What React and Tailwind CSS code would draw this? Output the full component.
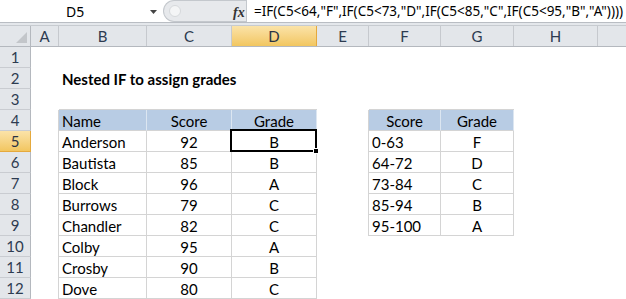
import React from "react";

const COLS = [
  { k: "A", w: 28 },
  { k: "B", w: 88 },
  { k: "C", w: 85 },
  { k: "D", w: 85 },
  { k: "E", w: 52 },
  { k: "F", w: 72 },
  { k: "G", w: 73 },
  { k: "H", w: 84 },
  { k: "I", w: 60 },
];

const students = [
  ["Anderson", 92, "B"],
  ["Bautista", 85, "B"],
  ["Block", 96, "A"],
  ["Burrows", 79, "C"],
  ["Chandler", 82, "C"],
  ["Colby", 95, "A"],
  ["Crosby", 90, "B"],
  ["Dove", 80, "C"],
];

const lookup = [
  ["0-63", "F"],
  ["64-72", "D"],
  ["73-84", "C"],
  ["85-94", "B"],
  ["95-100", "A"],
];

const font = { fontFamily: "Lato, 'Liberation Sans', sans-serif" };

function cellsFor(row) {
  const m = {};
  if (row === 2) {
    m.B = { text: "Nested IF to assign grades", align: "left", bold: true };
  }
  if (row === 3) {
    m.B = { bb: true };
    m.C = { bb: true };
    m.D = { bb: true };
    m.F = { bb: true };
    m.G = { bb: true };
  }
  if (row >= 4 && row <= 12) {
    m.A = { br: true };
  }
  if (row >= 4 && row <= 9) {
    m.E = { br: true };
  }
  if (row === 4) {
    m.B = { text: "Name", align: "left", hdr: true };
    m.C = { text: "Score", align: "center", hdr: true };
    m.D = { text: "Grade", align: "center", hdr: true };
    m.F = { text: "Score", align: "center", hdr: true };
    m.G = { text: "Grade", align: "center", hdr: true };
  }
  if (row >= 5 && row <= 12) {
    const s = students[row - 5];
    m.B = { text: s[0], align: "left", tbl: true };
    m.C = { text: String(s[1]), align: "center", tbl: true };
    m.D = { text: s[2], align: "center", tbl: true, sel: row === 5 };
  }
  if (row >= 5 && row <= 9) {
    const l = lookup[row - 5];
    m.F = { text: l[0], align: "left", tbl: true };
    m.G = { text: l[1], align: "center", tbl: true };
  }
  return m;
}

function Cell({ w, c }) {
  const cls = ["relative shrink-0 h-[21px] text-[15px] leading-[21px] text-black"];
  if (c && c.hdr) cls.push("bg-[#b8cce4] border-r border-b border-r-[#dce6f1] border-b-[#d4d4d4]");
  else if (c && c.tbl) cls.push("border-r border-b border-[#d4d4d4]");
  else {
    if (c && c.br) cls.push("border-r border-[#d4d4d4]");
    if (c && c.bb) cls.push("border-b border-[#d4d4d4]");
  }
  if (c && c.align === "center") cls.push("text-center");
  else cls.push("pl-[3px]");
  if (c && c.bold) cls.push("font-bold whitespace-nowrap overflow-visible");
  return (
    <div className={cls.join(" ")} style={{ width: w }}>
      {c && c.text ? <span className="relative top-[1px] whitespace-nowrap">{c.text}</span> : null}
      {c && c.sel ? (
        <div className="absolute left-[-2px] top-[-2px] w-[87px] h-[23px] border-2 border-black z-10">
          <div className="absolute right-[-4px] bottom-[-4px] w-[6px] h-[6px] bg-black border border-white" />
        </div>
      ) : null}
    </div>
  );
}

export default function App() {
  const rows = Array.from({ length: 12 }, (_, i) => i + 1);
  return (
    <div className="w-[626px] h-[299px] overflow-hidden bg-white" style={font}>
      {/* Formula bar */}
      <div className="flex h-[23px] bg-white border-b border-[#b9bdc3]">
        <div className="relative w-[163px] flex items-center">
          <span className="absolute left-[66px] top-[1px] leading-[21px] text-black" style={{ fontFamily: "'Noto Sans', sans-serif", fontSize: 14 }}>D5</span>
          <svg className="absolute left-[150px] top-[10px]" width="7" height="4" viewBox="0 0 7 4">
            <path d="M0 0 H7 L3.5 4 Z" fill="#444" />
          </svg>
        </div>
        <div className="relative w-[83px] h-[22px] bg-[#e7e9ec] rounded-l-[11px] border-l border-t border-b border-[#c4c8cd]">
          <div className="absolute left-[5px] top-[4px] w-[12px] h-[12px] rounded-full bg-[#f4f5f6] border border-[#d6d9dc]" />
          <span className="absolute left-[69px] top-[1px] text-[14px] italic font-bold text-[#333]" style={{ fontFamily: "'Liberation Serif', serif" }}>fx</span>
        </div>
        <div className="w-[1px] bg-[#c4c8cd]" />
        <div className="flex-1 pl-[7px] leading-[22px] text-black whitespace-nowrap overflow-hidden" style={{ fontFamily: "'Noto Sans', sans-serif", fontSize: 13.5 }}>
          =IF(C5&lt;64,"F",IF(C5&lt;73,"D",IF(C5&lt;85,"C",IF(C5&lt;95,"B","A"))))
        </div>
      </div>
      <div className="h-[3px] bg-[#e4e7eb] border-b border-[#c7cbd0]" />
      {/* column headers */}
      <div className="flex h-[21px] bg-[#e3e6ea] border-b border-[#b4b8be]">
        <div className="relative shrink-0 w-[31px] h-[20px] border-r border-[#b4b8be]">
          <svg className="absolute right-[3px] bottom-[3px]" width="11" height="11" viewBox="0 0 11 11">
            <path d="M11 0 V11 H0 Z" fill="#c3c6ca" />
          </svg>
        </div>
        {COLS.map((c) => (
          <div
            key={c.k}
            className={
              "shrink-0 h-[20px] text-center text-[15px] leading-[21px] border-r " +
              (c.k === "D"
                ? "bg-gradient-to-b from-[#fbe3a8] to-[#f2c65f] border-[#e5a93d] text-[#2a3344]"
                : "border-[#c6c9ce] text-[#2d3b50]")
            }
            style={{ width: c.w }}
          >
            {c.k === "I" ? "" : c.k}
          </div>
        ))}
      </div>
      {rows.map((r) => {
        const m = cellsFor(r);
        return (
          <div key={r} className="flex h-[21px]">
            <div
              className={
                "shrink-0 w-[31px] h-[21px] text-center text-[15px] leading-[21px] border-r border-b " +
                (r === 5
                  ? "bg-gradient-to-b from-[#fbe3a8] to-[#f2c65f] border-[#e5a93d] text-[#2a3344]"
                  : "bg-[#e3e6ea] border-r-[#b4b8be] border-b-[#c9ccd1] text-[#2d3b50]")
              }
            >
              {r}
            </div>
            {COLS.map((c) => (
              <Cell key={c.k} w={c.w} c={m[c.k]} />
            ))}
          </div>
        );
      })}
    </div>
  );
}
